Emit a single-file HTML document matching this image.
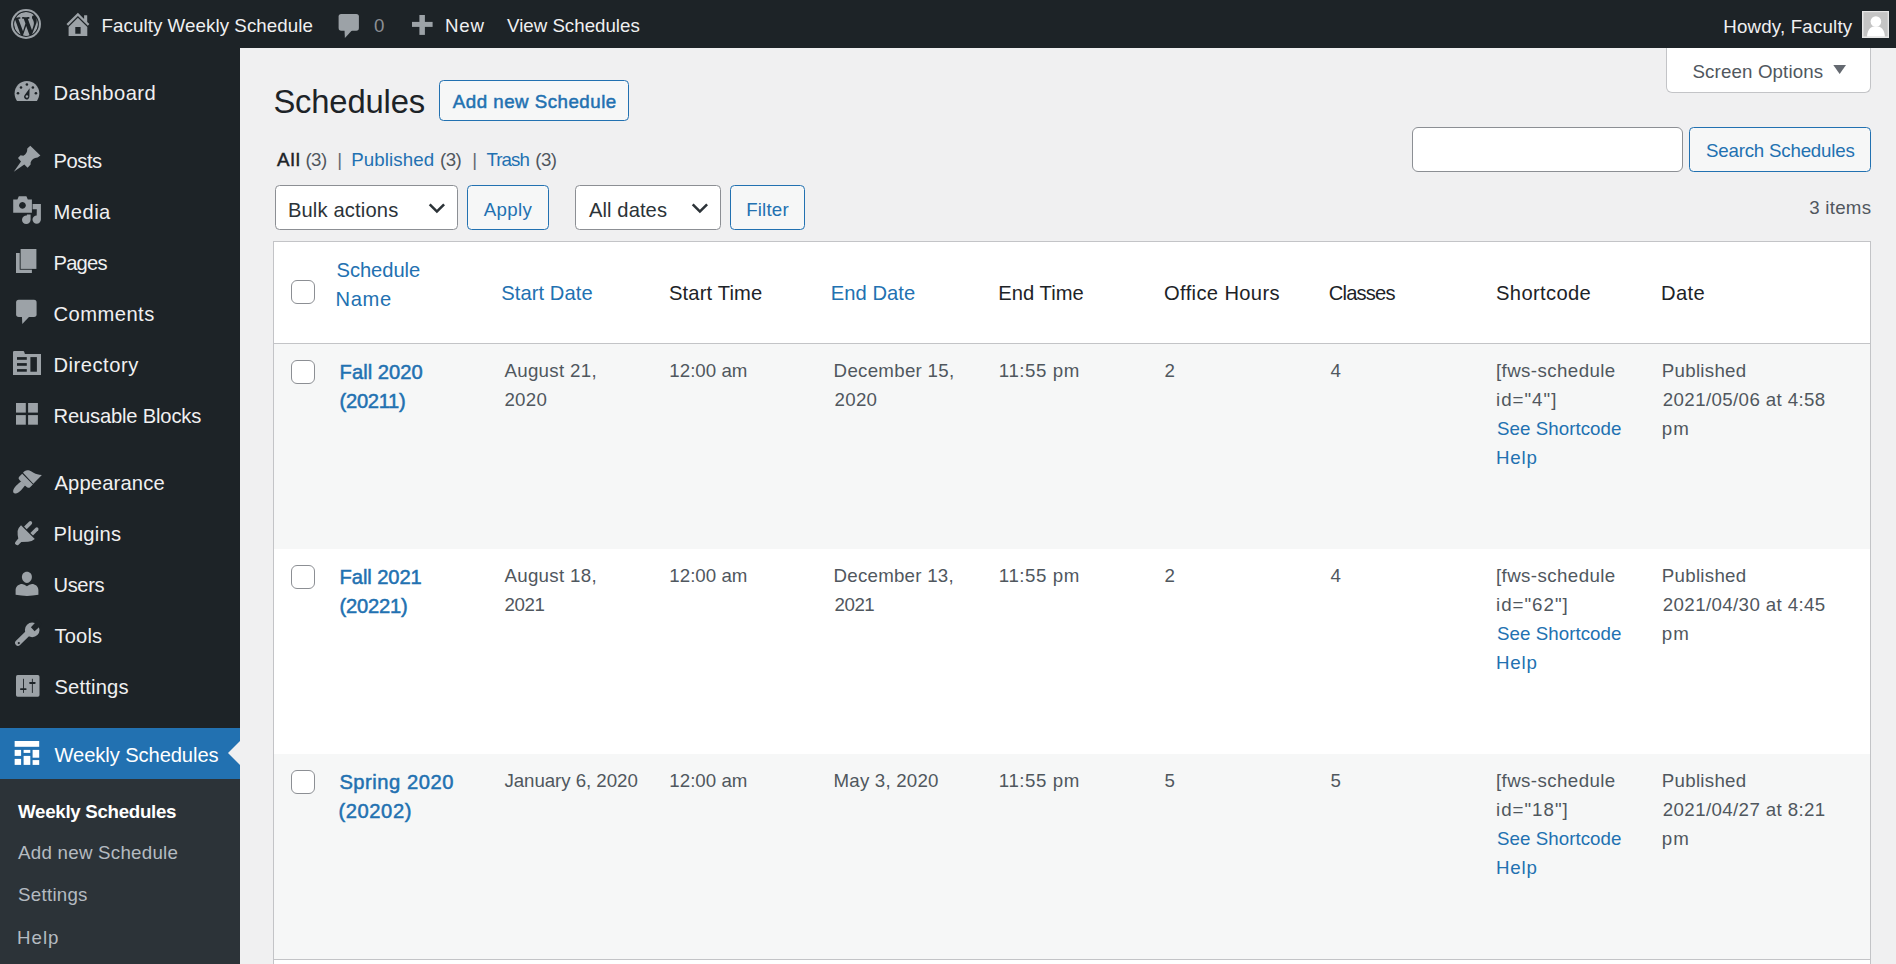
<!DOCTYPE html>
<html><head><meta charset="utf-8"><title>Schedules</title>
<style>
html,body{margin:0;padding:0}
body{width:1896px;height:964px;overflow:hidden;position:relative;background:#f0f0f1;font-family:"Liberation Sans",sans-serif}
.b{position:absolute;box-sizing:border-box}
.t{position:absolute;white-space:pre;line-height:1;font-family:"Liberation Sans",sans-serif}
.cb{position:absolute;box-sizing:border-box;width:24px;height:24px;border:1.5px solid #8c8f94;border-radius:6px;background:#fff}
svg{position:absolute;overflow:visible}

</style></head><body>
<div class="b" style="left:0;top:0;width:1896px;height:48px;background:#1d2327"></div>
<div class="b" style="left:0;top:48px;width:240px;height:916px;background:#1d2327"></div>
<div class="b" style="left:0;top:728px;width:240px;height:51px;background:#2271b1"></div>
<div class="b" style="left:0;top:779px;width:240px;height:185px;background:#2c3338"></div>
<svg style="left:0;top:0" width="1896" height="964"><polygon points="240.5,740.5 228,753 240.5,765.5" fill="#f0f0f1"/></svg>
<!-- screen options -->
<div class="b" style="left:1665.5px;top:48px;width:205px;height:45px;background:#fff;border:1.5px solid #c3c4c7;border-top:0;border-radius:0 0 6px 6px"></div>
<!-- add new -->
<div class="b" style="left:439px;top:80px;width:190px;height:41px;background:#f6f7f7;border:1.5px solid #2271b1;border-radius:4.5px"></div>
<!-- search -->
<div class="b" style="left:1412px;top:127px;width:271px;height:45px;background:#fff;border:1.5px solid #8c8f94;border-radius:6px"></div>
<div class="b" style="left:1689px;top:127px;width:182px;height:45px;background:#f6f7f7;border:1.5px solid #2271b1;border-radius:4.5px"></div>
<!-- tablenav -->
<div class="b" style="left:275px;top:185px;width:183px;height:45px;background:#fff;border:1.5px solid #8c8f94;border-radius:4.5px"></div>
<div class="b" style="left:467px;top:185px;width:82px;height:45px;background:#f6f7f7;border:1.5px solid #2271b1;border-radius:4.5px"></div>
<div class="b" style="left:575px;top:185px;width:146px;height:45px;background:#fff;border:1.5px solid #8c8f94;border-radius:4.5px"></div>
<div class="b" style="left:730px;top:185px;width:75px;height:45px;background:#f6f7f7;border:1.5px solid #2271b1;border-radius:4.5px"></div>
<!-- table -->
<div class="b" style="left:273px;top:241px;width:1598px;height:760px;background:#fff;border:1px solid #c3c4c7"></div>
<div class="b" style="left:274px;top:343px;width:1596px;height:1px;background:#c3c4c7"></div>
<div class="b" style="left:274px;top:344px;width:1596px;height:205px;background:#f6f7f7"></div>
<div class="b" style="left:274px;top:754px;width:1596px;height:205px;background:#f6f7f7"></div>
<div class="b" style="left:274px;top:959px;width:1596px;height:1px;background:#c3c4c7"></div>
<div class="cb" style="left:291px;top:280px"></div>
<div class="cb" style="left:291px;top:360px"></div>
<div class="cb" style="left:291px;top:565px"></div>
<div class="cb" style="left:291px;top:770px"></div>

<!-- WP logo -->
<svg style="left:10.5px;top:8.9px" width="30" height="30" viewBox="0 0 20 20">
<circle cx="10" cy="10" r="10" fill="#9ca2a7"/>
<circle cx="10" cy="10" r="8.6" fill="#1d2327"/>
<clipPath id="wpc"><circle cx="10" cy="10" r="7.93"/></clipPath>
<g clip-path="url(#wpc)"><path fill="#9ca2a7" transform="translate(10 10) scale(0.9) translate(-10 -10)" d="M7.78 15.37L4.37 6.22c.55-.02 1.17-.08 1.17-.08.5-.06.44-1.13-.06-1.11 0 0-1.45.11-2.37.11-.18 0-.37 0-.58-.01C4.12 2.690 6.87 1.11 10 1.11c2.33 0 4.45.87 6.050 2.34-.68-.11-1.65.39-1.65 1.58 0 .74.45 1.36.9 2.1.35.61.55 1.36.55 2.46 0 1.49-1.4 5-1.4 5l-3.03-8.37c.54-.02.82-.17.82-.17.5-.05.44-1.25-.06-1.22 0 0-1.44.12-2.38.12-.87 0-2.33-.12-2.33-.12-.5-.03-.56 1.2-.06 1.22l.92.08 1.26 3.41zM17.41 10c.24-.64.74-1.87.43-4.25.7 1.29 1.05 2.71 1.05 4.25 0 3.29-1.73 6.24-4.4 7.78.97-2.59 1.94-5.2 2.92-7.78zM6.1 18.09C3.12 16.65 1.11 13.53 1.11 10c0-1.3.23-2.48.72-3.59C3.25 10.3 4.67 14.2 6.1 18.09zm4.03-6.63l2.58 6.98c-.86.29-1.76.45-2.71.45-.79 0-1.57-.11-2.29-.33.81-2.38 1.62-4.74 2.42-7.1z"/></g>
</svg>
<!-- home -->
<svg style="left:62px;top:8px" width="32" height="32" viewBox="0 0 32 32" fill="#9ca2a7">
<path d="M4.5,16.1 L15.9,4.8 L22.1,11 L22.1,7.3 L25.2,7.3 L25.2,14 L27.4,16.1 L25.8,17.8 L15.9,8.1 L6.1,17.8 Z"/>
<path fill-rule="evenodd" d="M6.6,27.9 L6.6,18.9 L15.9,9.7 L25.3,18.9 L25.3,27.9 Z M13.3,19.1 L13.3,25.7 L18.6,25.7 L18.6,19.1 Z"/>
</svg>
<!-- comment bubble admin bar -->
<svg style="left:332px;top:8px" width="32" height="32" viewBox="0 0 32 32" fill="#9ca2a7">
<rect x="6.6" y="6" width="20.3" height="16.7" rx="2.6"/>
<path d="M12.5,22 L20.3,22 L12.9,30 Z"/>
</svg>
<!-- plus -->
<svg style="left:406px;top:8px" width="32" height="32" viewBox="0 0 32 32" fill="#9ca2a7">
<rect x="13.4" y="7" width="5.5" height="19.9"/>
<rect x="6" y="13.9" width="20.6" height="5"/>
</svg>
<!-- avatar -->
<svg style="left:1862px;top:10.8px" width="27" height="27" viewBox="0 0 27 27">
<rect x="0" y="0" width="27" height="27" fill="#e6e6e6"/>
<rect x="1.5" y="1.2" width="24.2" height="24.3" fill="#c4c4c4"/>
<circle cx="13.9" cy="10.5" r="5.3" fill="#fff"/>
<path d="M5,25.5 C5.5,18 9,15.2 13.9,15.2 C18.8,15.2 22.4,18 22.9,25.5 Z" fill="#fff"/>
</svg>
<!-- dashboard -->
<svg style="left:11px;top:76px" width="32" height="32" viewBox="0 0 32 32">
<path fill="#9ca2a7" d="M6,24.9 C4.3,22.7 3.6,20 3.6,17.3 C3.6,10.5 9.1,5 15.9,5 C22.7,5 28.3,10.5 28.3,17.3 C28.3,20 27.5,22.7 25.9,24.9 Z"/>
<g fill="#1d2327"><circle cx="15.9" cy="8.5" r="1.3"/><circle cx="10" cy="11.45" r="1.3"/><circle cx="21.9" cy="11.45" r="1.3"/><circle cx="7" cy="17.3" r="1.3"/><circle cx="24.9" cy="17.3" r="1.3"/>
<path d="M18.6,12.2 L18.4,20.6 A2.7,2.7 0 1 1 13.7,18.9 Z"/></g>
<circle cx="15.9" cy="20.4" r="1.25" fill="#9ca2a7"/>
</svg>
<!-- posts pin -->
<svg style="left:11px;top:143px" width="32" height="32" viewBox="0 0 32 32" fill="#9ca2a7">
<path d="M2.8,28.7 L10,18.4 L7,15.1 L9.6,12.3 L12.3,12.8 Q16.5,10.5 16.3,5.6 L19.3,2.8 L29.4,12.4 L26.6,14.6 Q21,15 19.6,19.5 L19.6,21.6 L16.6,24.7 L13.3,21.6 Z"/>
</svg>
<!-- media -->
<svg style="left:11px;top:194px" width="32" height="32" viewBox="0 0 32 32" fill="#9ca2a7">
<path fill-rule="evenodd" d="M2.2,5.5 L6.4,5.5 L7.8,2.2 L15.4,2.2 L16.8,5.5 L20.9,5.5 L20.9,18.8 L2.2,18.8 Z M11.45,8 A3.4,3.4 0 1 0 11.46,8 Z"/>
<path d="M21.6,10 L29.9,10 L29.9,25.6 A4.2,4.2 0 1 1 25.7,21.4 L25.8,15.3 L21.6,15.3 Z"/>
<path d="M15.9,20.6 L19.6,20.6 L19.6,25.6 A4.3,4.3 0 1 1 15.9,21.5 Z"/>
</svg>
<!-- pages -->
<svg style="left:11px;top:245px" width="32" height="32" viewBox="0 0 32 32">
<rect x="5" y="8" width="15.9" height="20" fill="#9ca2a7"/>
<rect x="8.7" y="3.2" width="17.5" height="21.5" fill="#1d2327"/>
<rect x="9.6" y="4" width="15.8" height="19.9" fill="#9ca2a7"/>
</svg>
<!-- comments -->
<svg style="left:11px;top:296px" width="32" height="32" viewBox="0 0 32 32" fill="#9ca2a7">
<rect x="5.1" y="3.8" width="20.5" height="17.1" rx="2.6"/>
<path d="M10.9,20 L18.9,20 L11.3,27.9 Z"/>
</svg>
<!-- directory -->
<svg style="left:11px;top:347px" width="32" height="32" viewBox="0 0 32 32">
<path fill="#9ca2a7" d="M2,27.9 L2,5.3 Q2,4 3.3,4 L12.2,4 Q12.9,4 13.2,4.8 L13.9,7 L30,7 L30,27.9 Z"/>
<g fill="#1d2327"><rect x="6" y="10.1" width="9.8" height="2.7"/><rect x="6" y="16.1" width="9.8" height="2.7"/><rect x="6" y="22.1" width="9.8" height="2.6"/><rect x="19.4" y="10.1" width="6.5" height="14.6"/></g>
</svg>
<!-- blocks -->
<svg style="left:11px;top:398px" width="32" height="32" viewBox="0 0 32 32" fill="#9ca2a7">
<rect x="5" y="5" width="9.8" height="9.6"/><rect x="17.1" y="5" width="9.8" height="9.6"/><rect x="5" y="17.1" width="9.8" height="9.6"/><rect x="17.1" y="17.1" width="9.8" height="9.6"/>
</svg>
<!-- appearance -->
<svg style="left:11px;top:465px" width="32" height="32" viewBox="0 0 32 32" fill="#9ca2a7">
<path d="M12,7.7 C13.5,5.5 15.5,4.7 18.5,5.5 C21,6.3 24,9.8 30.9,10.1 L22.3,18.7 Z"/>
<path d="M11.2,8.7 L21.9,19.4 L18.8,22.6 Q17.5,23.2 16,22.2 L13.9,20.6 L10,16.6 Q8.2,15.2 7.6,13.6 Q7.5,12.3 8.4,11.4 Z"/>
<path d="M10.3,16.3 L14.2,20.3 C11.5,23.5 9,27.5 5,28.5 C3,29 1.8,27.5 2.2,25.5 C3,22 7,19 10.3,16.3 Z"/>
</svg>
<!-- plugins -->
<svg style="left:11px;top:516px" width="32" height="32" viewBox="0 0 32 32" fill="#9ca2a7">
<path d="M10,9.3 L23.8,23 Q21,25.5 17,25.8 L10.3,26 L7,29.2 Q5,29.5 4,27.8 Q3.7,26.5 4.8,25.4 L7.3,22.5 Q6.4,19 6.6,15 Q7.5,11.5 10,9.3 Z"/>
<path d="M13.1,10.6 L18.2,5.5 Q19.4,4.6 20.6,5.5 Q21.6,6.7 20.9,7.9 L15.7,13.2 Z"/>
<path d="M19.4,17 L24.6,11.8 Q25.8,10.9 27,11.8 Q28,13 27.2,14.2 L22,19.5 Z"/>
</svg>
<!-- users -->
<svg style="left:11px;top:567px" width="32" height="32" viewBox="0 0 32 32" fill="#9ca2a7">
<path d="M15.9,4.7 C19,4.7 20.9,7 20.9,10 C20.9,13 18.6,15.9 15.9,15.9 C13.2,15.9 10.9,13 10.9,10 C10.9,7 12.8,4.7 15.9,4.7 Z"/>
<path d="M4.6,27.8 L4.6,23 C4.6,19 8,16.9 11,16.9 Q13.5,17.2 15.9,19.2 Q18.3,17.2 21,16.9 C24,16.9 27.4,19 27.4,23 L27.4,27.8 Q16,30 4.6,27.8 Z"/>
</svg>
<!-- tools -->
<svg style="left:11px;top:618px" width="32" height="32" viewBox="0 0 32 32">
<circle cx="21.2" cy="11.9" r="7.3" fill="#9ca2a7"/>
<path fill="#1d2327" d="M23.9,5 L19.9,9.3 L23.6,13.3 L28,9.3 L31,6 L26,1 Z"/>
<line x1="7" y1="24.9" x2="18" y2="14.2" stroke="#9ca2a7" stroke-width="5.8" stroke-linecap="round"/>
<circle cx="7.8" cy="25.1" r="1.1" fill="#1d2327"/>
</svg>
<!-- settings -->
<svg style="left:11px;top:669px" width="32" height="32" viewBox="0 0 32 32">
<rect x="5" y="6.1" width="23.5" height="21.6" rx="1.6" fill="#9ca2a7"/>
<g fill="#1d2327"><rect x="12" y="9.8" width="0.9" height="14.1"/><rect x="9" y="19.3" width="6.6" height="1.7" rx="0.8"/><rect x="20.9" y="9.8" width="0.9" height="14.1"/><rect x="18.1" y="13.1" width="6.6" height="1.8" rx="0.8"/></g>
</svg>
<!-- weekly schedules -->
<svg style="left:11px;top:737px" width="32" height="32" viewBox="0 0 32 32" fill="#fff">
<rect x="3.65" y="4" width="24.55" height="5.8"/>
<rect x="3.65" y="12.9" width="6.45" height="6"/><rect x="12.6" y="12.9" width="6.7" height="3"/><rect x="21.6" y="12.9" width="6.6" height="7.8"/>
<rect x="3.65" y="21.9" width="6.45" height="6"/><rect x="12.6" y="18.9" width="6.7" height="9"/><rect x="21.6" y="23.1" width="6.6" height="4.8"/>
</svg>
<!-- chevrons -->
<svg style="left:421px;top:195px" width="32" height="32" viewBox="0 0 32 32" fill="#2c3338"><path d="M7.8,10.2 L9.6,8.5 L15.9,14.8 L22.2,8.5 L24,10.2 L15.9,18.3 Z"/></svg>
<svg style="left:684px;top:195px" width="32" height="32" viewBox="0 0 32 32" fill="#2c3338"><path d="M7.8,10.2 L9.6,8.5 L15.9,14.8 L22.2,8.5 L24,10.2 L15.9,18.3 Z"/></svg>
<!-- screen options arrow -->
<svg style="left:0;top:0" width="1896" height="100"><polygon points="1833.3,65 1846,65 1839.65,74" fill="#646970"/></svg>

<span class="t" style="left:101.50px;top:17.00px;font-size:18.72px;color:#f0f0f1;letter-spacing:0.080px">Faculty Weekly Schedule</span><span class="t" style="left:374.00px;top:17.00px;font-size:18.72px;color:#8c8f94">0</span><span class="t" style="left:445.00px;top:17.00px;font-size:18.72px;color:#f0f0f1;letter-spacing:0.796px">New</span><span class="t" style="left:507.00px;top:17.00px;font-size:18.72px;color:#f0f0f1">View Schedules</span><span class="t" style="left:1723.30px;top:18.00px;font-size:18.72px;color:#f0f0f1;letter-spacing:0.184px">Howdy, Faculty</span><span class="t" style="left:53.50px;top:83.00px;font-size:20.16px;color:#f0f0f1;letter-spacing:0.450px">Dashboard</span><span class="t" style="left:53.50px;top:151.00px;font-size:20.16px;color:#f0f0f1;letter-spacing:-0.433px">Posts</span><span class="t" style="left:53.50px;top:202.00px;font-size:20.16px;color:#f0f0f1;letter-spacing:0.478px">Media</span><span class="t" style="left:53.50px;top:253.00px;font-size:20.16px;color:#f0f0f1;letter-spacing:-0.768px">Pages</span><span class="t" style="left:53.50px;top:304.00px;font-size:20.16px;color:#f0f0f1;letter-spacing:0.476px">Comments</span><span class="t" style="left:53.50px;top:355.00px;font-size:20.16px;color:#f0f0f1;letter-spacing:0.518px">Directory</span><span class="t" style="left:53.50px;top:406.00px;font-size:20.16px;color:#f0f0f1;letter-spacing:-0.168px">Reusable Blocks</span><span class="t" style="left:54.50px;top:473.00px;font-size:20.16px;color:#f0f0f1;letter-spacing:0.167px">Appearance</span><span class="t" style="left:53.50px;top:524.00px;font-size:20.16px;color:#f0f0f1;letter-spacing:0.245px">Plugins</span><span class="t" style="left:53.50px;top:575.00px;font-size:20.16px;color:#f0f0f1;letter-spacing:-0.389px">Users</span><span class="t" style="left:54.50px;top:626.00px;font-size:20.16px;color:#f0f0f1;letter-spacing:0.131px">Tools</span><span class="t" style="left:54.50px;top:677.00px;font-size:20.16px;color:#f0f0f1;letter-spacing:0.178px">Settings</span><span class="t" style="left:54.50px;top:745.00px;font-size:20.16px;color:#ffffff;letter-spacing:-0.091px">Weekly Schedules</span><span class="t" style="left:18.10px;top:803.00px;font-size:18.72px;color:#ffffff;font-weight:700;letter-spacing:-0.298px">Weekly Schedules</span><span class="t" style="left:18.10px;top:844.00px;font-size:18.72px;color:#b5bbc1;letter-spacing:0.255px">Add new Schedule</span><span class="t" style="left:18.10px;top:886.00px;font-size:18.72px;color:#b5bbc1;letter-spacing:0.253px">Settings</span><span class="t" style="left:17.10px;top:929.00px;font-size:18.72px;color:#b5bbc1;letter-spacing:0.979px">Help</span><span class="t" style="left:273.40px;top:86.00px;font-size:32.77px;color:#1d2327;letter-spacing:-0.166px">Schedules</span><span class="t" style="left:452.80px;top:93.00px;font-size:18.72px;color:#2271b1;-webkit-text-stroke:0.5px #2271b1;letter-spacing:0.495px">Add new Schedule</span><span class="t" style="left:1692.50px;top:63.00px;font-size:18.72px;color:#50575e;letter-spacing:0.134px">Screen Options</span><span class="t" style="left:277.10px;top:151.00px;font-size:18.72px;color:#1d2327;-webkit-text-stroke:0.5px #1d2327;letter-spacing:1.000px">All</span><span class="t" style="left:305.40px;top:151.00px;font-size:18.72px;color:#50575e;letter-spacing:-0.515px">(3)</span><span class="t" style="left:337.30px;top:151.00px;font-size:18.72px;color:#646970">|</span><span class="t" style="left:351.30px;top:151.00px;font-size:18.72px;color:#2271b1;letter-spacing:0.094px">Published</span><span class="t" style="left:440.00px;top:151.00px;font-size:18.72px;color:#50575e;letter-spacing:-0.565px">(3)</span><span class="t" style="left:472.30px;top:151.00px;font-size:18.72px;color:#646970">|</span><span class="t" style="left:486.50px;top:151.00px;font-size:18.72px;color:#2271b1;letter-spacing:-0.928px">Trash</span><span class="t" style="left:535.30px;top:151.00px;font-size:18.72px;color:#50575e;letter-spacing:-0.615px">(3)</span><span class="t" style="left:287.90px;top:200.00px;font-size:20.16px;color:#2c3338;letter-spacing:0.155px">Bulk actions</span><span class="t" style="left:483.80px;top:201.00px;font-size:18.72px;color:#2271b1;letter-spacing:0.317px">Apply</span><span class="t" style="left:589.00px;top:200.00px;font-size:20.16px;color:#2c3338;letter-spacing:0.084px">All dates</span><span class="t" style="left:746.20px;top:201.00px;font-size:18.72px;color:#2271b1;letter-spacing:0.173px">Filter</span><span class="t" style="left:1706.00px;top:142.00px;font-size:18.72px;color:#2271b1;letter-spacing:-0.203px">Search Schedules</span><span class="t" style="left:1809.20px;top:199.00px;font-size:18.72px;color:#50575e;letter-spacing:0.261px">3 items</span><span class="t" style="left:336.50px;top:260.00px;font-size:20.16px;color:#2271b1;letter-spacing:-0.049px">Schedule</span><span class="t" style="left:335.50px;top:289.00px;font-size:20.16px;color:#2271b1;letter-spacing:0.648px">Name</span><span class="t" style="left:501.20px;top:283.00px;font-size:20.16px;color:#2271b1;letter-spacing:0.085px">Start Date</span><span class="t" style="left:669.00px;top:283.00px;font-size:20.16px;color:#1d2327;letter-spacing:0.145px">Start Time</span><span class="t" style="left:830.80px;top:283.00px;font-size:20.16px;color:#2271b1;letter-spacing:0.053px">End Date</span><span class="t" style="left:998.30px;top:283.00px;font-size:20.16px;color:#1d2327;letter-spacing:0.043px">End Time</span><span class="t" style="left:1164.00px;top:283.00px;font-size:20.16px;color:#1d2327;letter-spacing:0.357px">Office Hours</span><span class="t" style="left:1328.80px;top:283.00px;font-size:20.16px;color:#1d2327;letter-spacing:-0.818px">Classes</span><span class="t" style="left:1496.00px;top:283.00px;font-size:20.16px;color:#1d2327;letter-spacing:0.366px">Shortcode</span><span class="t" style="left:1661.00px;top:283.00px;font-size:20.16px;color:#1d2327;letter-spacing:0.411px">Date</span><span class="t" style="left:339.60px;top:362.00px;font-size:20.16px;color:#2271b1;-webkit-text-stroke:0.5px #2271b1;letter-spacing:0.036px">Fall 2020</span><span class="t" style="left:339.60px;top:391.00px;font-size:20.16px;color:#2271b1;-webkit-text-stroke:0.5px #2271b1;letter-spacing:-0.311px">(20211)</span><span class="t" style="left:504.40px;top:362.00px;font-size:18.72px;color:#50575e;letter-spacing:0.308px">August 21,</span><span class="t" style="left:504.40px;top:391.00px;font-size:18.72px;color:#50575e;letter-spacing:0.265px">2020</span><span class="t" style="left:669.30px;top:362.00px;font-size:18.72px;color:#50575e;letter-spacing:0.014px">12:00 am</span><span class="t" style="left:833.60px;top:362.00px;font-size:18.72px;color:#50575e;letter-spacing:0.275px">December 15,</span><span class="t" style="left:834.60px;top:391.00px;font-size:18.72px;color:#50575e;letter-spacing:0.265px">2020</span><span class="t" style="left:998.80px;top:362.00px;font-size:18.72px;color:#50575e;letter-spacing:0.570px">11:55 pm</span><span class="t" style="left:1164.50px;top:362.00px;font-size:18.72px;color:#50575e">2</span><span class="t" style="left:1330.50px;top:362.00px;font-size:18.72px;color:#50575e">4</span><span class="t" style="left:1496.00px;top:362.00px;font-size:18.72px;color:#50575e;letter-spacing:0.405px">[fws-schedule</span><span class="t" style="left:1496.00px;top:391.00px;font-size:18.72px;color:#50575e;letter-spacing:1.000px">id=&quot;4&quot;]</span><span class="t" style="left:1497.00px;top:420.00px;font-size:18.72px;color:#2271b1;letter-spacing:0.056px">See Shortcode</span><span class="t" style="left:1496.00px;top:449.00px;font-size:18.72px;color:#2271b1;letter-spacing:0.812px">Help</span><span class="t" style="left:1661.80px;top:362.00px;font-size:18.72px;color:#50575e;letter-spacing:0.282px">Published</span><span class="t" style="left:1662.80px;top:391.00px;font-size:18.72px;color:#50575e;letter-spacing:0.377px">2021/05/06 at 4:58</span><span class="t" style="left:1661.80px;top:420.00px;font-size:18.72px;color:#50575e;letter-spacing:1.000px">pm</span><span class="t" style="left:339.60px;top:567.00px;font-size:20.16px;color:#2271b1;-webkit-text-stroke:0.5px #2271b1;letter-spacing:-0.089px">Fall 2021</span><span class="t" style="left:339.60px;top:596.00px;font-size:20.16px;color:#2271b1;-webkit-text-stroke:0.5px #2271b1;letter-spacing:-0.210px">(20221)</span><span class="t" style="left:504.40px;top:567.00px;font-size:18.72px;color:#50575e;letter-spacing:0.308px">August 18,</span><span class="t" style="left:504.40px;top:596.00px;font-size:18.72px;color:#50575e;letter-spacing:-0.335px">2021</span><span class="t" style="left:669.30px;top:567.00px;font-size:18.72px;color:#50575e;letter-spacing:0.014px">12:00 am</span><span class="t" style="left:833.60px;top:567.00px;font-size:18.72px;color:#50575e;letter-spacing:0.230px">December 13,</span><span class="t" style="left:834.60px;top:596.00px;font-size:18.72px;color:#50575e;letter-spacing:-0.502px">2021</span><span class="t" style="left:998.80px;top:567.00px;font-size:18.72px;color:#50575e;letter-spacing:0.570px">11:55 pm</span><span class="t" style="left:1164.50px;top:567.00px;font-size:18.72px;color:#50575e">2</span><span class="t" style="left:1330.50px;top:567.00px;font-size:18.72px;color:#50575e">4</span><span class="t" style="left:1496.00px;top:567.00px;font-size:18.72px;color:#50575e;letter-spacing:0.405px">[fws-schedule</span><span class="t" style="left:1496.00px;top:596.00px;font-size:18.72px;color:#50575e;letter-spacing:1.000px">id=&quot;62&quot;]</span><span class="t" style="left:1497.00px;top:625.00px;font-size:18.72px;color:#2271b1;letter-spacing:0.056px">See Shortcode</span><span class="t" style="left:1496.00px;top:654.00px;font-size:18.72px;color:#2271b1;letter-spacing:0.812px">Help</span><span class="t" style="left:1661.80px;top:567.00px;font-size:18.72px;color:#50575e;letter-spacing:0.282px">Published</span><span class="t" style="left:1662.80px;top:596.00px;font-size:18.72px;color:#50575e;letter-spacing:0.377px">2021/04/30 at 4:45</span><span class="t" style="left:1661.80px;top:625.00px;font-size:18.72px;color:#50575e;letter-spacing:1.000px">pm</span><span class="t" style="left:339.40px;top:772.00px;font-size:20.16px;color:#2271b1;-webkit-text-stroke:0.5px #2271b1;letter-spacing:0.531px">Spring 2020</span><span class="t" style="left:338.40px;top:801.00px;font-size:20.16px;color:#2271b1;-webkit-text-stroke:0.5px #2271b1;letter-spacing:0.590px">(20202)</span><span class="t" style="left:504.40px;top:772.00px;font-size:18.72px;color:#50575e;letter-spacing:-0.052px">January 6, 2020</span><span class="t" style="left:669.30px;top:772.00px;font-size:18.72px;color:#50575e;letter-spacing:0.014px">12:00 am</span><span class="t" style="left:833.60px;top:772.00px;font-size:18.72px;color:#50575e;letter-spacing:0.187px">May 3, 2020</span><span class="t" style="left:998.80px;top:772.00px;font-size:18.72px;color:#50575e;letter-spacing:0.570px">11:55 pm</span><span class="t" style="left:1164.50px;top:772.00px;font-size:18.72px;color:#50575e">5</span><span class="t" style="left:1330.50px;top:772.00px;font-size:18.72px;color:#50575e">5</span><span class="t" style="left:1496.00px;top:772.00px;font-size:18.72px;color:#50575e;letter-spacing:0.405px">[fws-schedule</span><span class="t" style="left:1496.00px;top:801.00px;font-size:18.72px;color:#50575e;letter-spacing:1.000px">id=&quot;18&quot;]</span><span class="t" style="left:1497.00px;top:830.00px;font-size:18.72px;color:#2271b1;letter-spacing:0.056px">See Shortcode</span><span class="t" style="left:1496.00px;top:859.00px;font-size:18.72px;color:#2271b1;letter-spacing:0.812px">Help</span><span class="t" style="left:1661.80px;top:772.00px;font-size:18.72px;color:#50575e;letter-spacing:0.282px">Published</span><span class="t" style="left:1662.80px;top:801.00px;font-size:18.72px;color:#50575e;letter-spacing:0.377px">2021/04/27 at 8:21</span><span class="t" style="left:1661.80px;top:830.00px;font-size:18.72px;color:#50575e;letter-spacing:1.000px">pm</span>
</body></html>
